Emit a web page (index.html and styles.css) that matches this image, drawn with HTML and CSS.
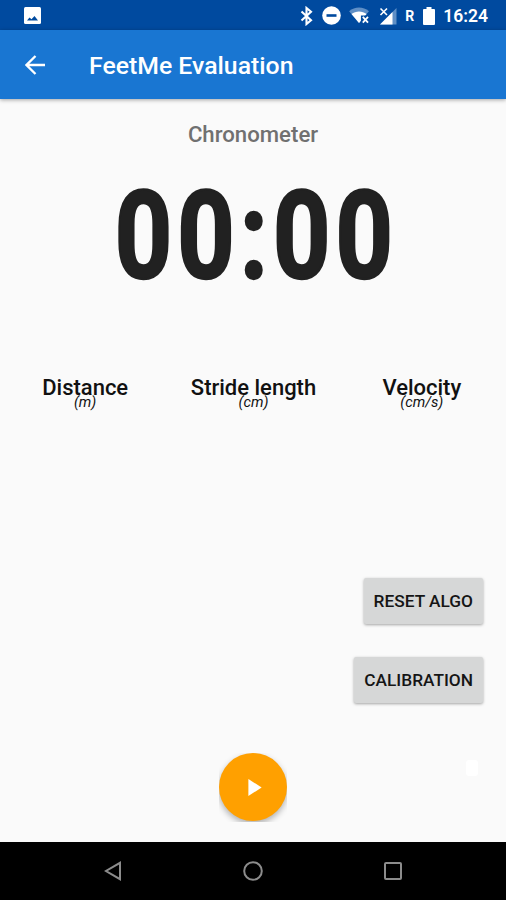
FILE: index.html
```
<!DOCTYPE html>
<html lang="en">
<head>
    <meta charset="UTF-8">
    <meta name="viewport" content="width=device-width, initial-scale=1.0">
    <title>FeetMe Evaluation</title>
    <link rel="stylesheet" href="styles.css">
</head>
<body>
    <div class="statusbar">
        <svg class="picture" width="17" height="17" viewBox="0 0 17 17">
            <rect width="17" height="17" rx="1.5" fill="#fff"/>
            <path d="M3 13.500 5.500 10.500l2 1.800 3-3.300 3.500 4.500z" fill="#004a9f"/>
        </svg>
        <div class="status-icons">
            <svg width="13" height="20" viewBox="0 0 13 20">
                <path d="M1.500 5.500 11 14.200 6.500 18V2L11 5.800 1.500 14.500" fill="none" stroke="#fff" stroke-width="2.100"/>
            </svg>
            <svg width="19" height="19" viewBox="0 0 19 19">
                <circle cx="9.5" cy="9.5" r="9.3" fill="#fff"/>
                <rect x="4.5" y="8.2" width="10" height="2.6" fill="#004a9f"/>
            </svg>
            <svg width="21" height="17" viewBox="0 0 22 18">
                <path d="M0 4.5C6-.8 15-.8 21 4.5L10.500 17z" fill="#5f8fc6"/>
                <path d="M2.500 7.400c4.500-3.600 11.500-3.600 16 0L10.500 17z" fill="#fff"/>
                <path d="M12.500 9H22v9h-9.500z" fill="#004a9f"/>
                <path d="M14.500 10.500l5.500 6M20 10.500l-5.500 6" stroke="#fff" stroke-width="1.900"/>
            </svg>
            <svg width="18" height="18" viewBox="0 0 18 18">
                <path d="M1 17.500 17.500 1v16.500z" fill="#5f8fc6"/>
                <path d="M1 17.500 13.500 5v12.500z" fill="#fff"/>
                <path d="M1.500 1.500l6.500 6.500M8 1.500L1.500 8" stroke="#fff" stroke-width="1.600"/>
            </svg>
            <span class="roaming">R</span>
            <svg width="12" height="18" viewBox="0 0 12 18">
                <path d="M3.500 0h5v2H11q1 0 1 1v14q0 1-1 1H1q-1 0-1-1V3q0-1 1-1h2.500z" fill="#fff"/>
            </svg>
            <span class="time">16:24</span>
        </div>
    </div>
    <div class="toolbar">
        <svg width="20" height="20" viewBox="0 0 20 20">
            <path d="M20 10H2M10.500 1 1.500 10l9 9" fill="none" stroke="#fff" stroke-width="2.300"/>
        </svg>
        <h1>FeetMe Evaluation</h1>
    </div>
    <div class="content">
        <h2>Chronometer</h2>
        <div class="clock">00:00</div>
        <div class="metrics">
            <div class="metric"><b>Distance</b><i>(m)</i></div>
            <div class="metric"><b>Stride length</b><i>(cm)</i></div>
            <div class="metric"><b>Velocity</b><i>(cm/s)</i></div>
        </div>
        <div class="actions">
            <button>RESET ALGO</button>
            <button>CALIBRATION</button>
        </div>
        <div class="play-wrap">
            <button class="play">
                <svg width="14" height="17" viewBox="0 0 14 18"><path d="M0 0l14 9L0 18z" fill="#fff"/></svg>
            </button>
        </div>
        <span class="marker"></span>
    </div>
    <div class="navbar">
        <svg width="18" height="20" viewBox="0 0 18 20">
            <path d="M16 1.800v16.400L2 10z" fill="none" stroke="#8c8c8c" stroke-width="2"/>
        </svg>
        <svg width="20" height="20" viewBox="0 0 20 20">
            <circle cx="10" cy="10" r="8.800" fill="none" stroke="#8c8c8c" stroke-width="2"/>
        </svg>
        <svg width="18" height="18" viewBox="0 0 18 18">
            <rect x="1" y="1" width="16" height="16" rx="1" fill="none" stroke="#8c8c8c" stroke-width="2"/>
        </svg>
    </div>
</body>
</html>
```
FILE: styles.css
```
* {
    box-sizing: border-box;
}

body {
    margin: 0;
    height: 900px;
    display: flex;
    flex-direction: column;
    background: #fafafa;
    font-family: Roboto, sans-serif;
    color: #111;
    overflow: hidden;
}

svg {
    display: block;
    flex: none;
}

.statusbar {
    height: 30px;
    padding: 1px 18px 0 24px;
    display: flex;
    align-items: center;
    justify-content: space-between;
    background: #004a9f;
    color: #fff;
}

.status-icons {
    display: flex;
    align-items: center;
    gap: 8.5px;
}

.roaming {
    width: 9px;
    font-size: 14px;
    font-weight: 700;
}

.time {
    font-size: 17.5px;
    font-weight: 600;
}

.toolbar {
    height: 69px;
    padding: 0 26px 0 25px;
    display: flex;
    align-items: center;
    gap: 44px;
    background: #1976d2;
    color: #fff;
    box-shadow: 0 1px 4px rgba(0, 0, 0, 0.35);
}

.toolbar h1 {
    margin: 2px 0 0;
    font-size: 24.8px;
    font-weight: 500;
}

.content {
    position: relative;
    flex: 1;
    display: flex;
    flex-direction: column;
}

.content h2 {
    margin: 22px 0 0;
    font-size: 22.2px;
    line-height: 26px;
    font-weight: 500;
    text-align: center;
    color: #707070;
}

.clock {
    margin-top: 17px;
    padding-left: 8px;
    font-size: 122px;
    line-height: 146px;
    font-weight: 700;
    letter-spacing: 6.2px;
    text-align: center;
    color: #212121;
    -webkit-text-stroke: 2.5px #212121;
    transform: scaleX(0.82);
}

.metrics {
    margin-top: 65px;
    padding-left: 1px;
    display: grid;
    grid-template-columns: repeat(3, 1fr);
    text-align: center;
}

.metric {
    display: flex;
    flex-direction: column;
}

.metric b {
    font-size: 22px;
    line-height: 25px;
    font-weight: 500;
}

.metric i {
    margin-top: -6px;
    font-size: 14.7px;
    line-height: 17px;
}

.actions {
    margin: 167px 23px 0 0;
    display: flex;
    flex-direction: column;
    align-items: flex-end;
    gap: 33px;
}

.actions button {
    height: 46px;
    padding: 0 10px;
    border: none;
    border-radius: 2px;
    background: #d6d7d7;
    box-shadow: 0 1px 3px rgba(0, 0, 0, 0.35);
    font: 500 17.3px Roboto, sans-serif;
    color: #151515;
}

/* the button shadow is cut off at the wrapper edges */
.play-wrap {
    width: 68px;
    height: 69px;
    margin: 50px auto 0;
    overflow: hidden;
}

.play {
    width: 68px;
    height: 68px;
    padding: 0 0 0 3px;
    border: none;
    border-radius: 50%;
    display: flex;
    align-items: center;
    justify-content: center;
    background: #ffa000;
    box-shadow: 0 3px 6px rgba(0, 0, 0, 0.3);
}

.marker {
    position: absolute;
    right: 28px;
    bottom: 66px;
    width: 12px;
    height: 16px;
    border-radius: 3px;
    background: #fff;
}

.navbar {
    height: 58px;
    padding: 0 104px;
    display: flex;
    align-items: center;
    justify-content: space-between;
    background: #000;
}
```
